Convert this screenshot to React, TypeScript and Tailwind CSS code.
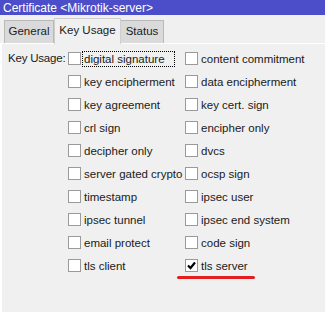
import React from "react";

const left = [
  "digital signature",
  "key encipherment",
  "key agreement",
  "crl sign",
  "decipher only",
  "server gated crypto",
  "timestamp",
  "ipsec tunnel",
  "email protect",
  "tls client",
];

const right = [
  "content commitment",
  "data encipherment",
  "key cert. sign",
  "encipher only",
  "dvcs",
  "ocsp sign",
  "ipsec user",
  "ipsec end system",
  "code sign",
  "tls server",
];

const Check = ({ label, checked, focused, mark }: { label: string; checked?: boolean; focused?: boolean; mark?: boolean }) => (
  <div className="relative flex h-[23px] items-center whitespace-nowrap">
    <div className="flex h-[13px] w-[13px] shrink-0 items-center justify-center border border-[#9a9a9a] bg-white">
      {checked && (
        <svg width="9" height="9" viewBox="0 0 9 9">
          <path d="M1 4.5 L3.5 7 L8 1.5" fill="none" stroke="#000" strokeWidth="2.2" />
        </svg>
      )}
    </div>
    <span
      className={
        "ml-[2px] px-[1px] leading-[14px] " +
        (focused ? "w-[91px] outline outline-1 outline-dotted outline-black" : "")
      }
    >
      {label}
    </span>
    {mark && <div className="absolute left-[-8px] top-[22px] h-[3px] w-[78px] rounded-full bg-[#e41e1e]" />}
  </div>
);

export default function App() {
  return (
    <div
      className="h-[312px] w-[325px] overflow-hidden bg-[#f0f0f0] text-[11.5px] text-[#1a1a1a]"
      style={{ fontFamily: "'Liberation Sans', Arial, sans-serif" }}
    >
      <div className="flex h-[15px] items-center bg-[#4b4ec8] pl-[3px] text-[12px] text-white leading-none">
        Certificate &lt;Mikrotik-server&gt;
      </div>
      <div className="flex h-[28px] items-end pl-[4px]">
        <div className="flex h-[23px] w-[50px] items-center justify-center border border-b-0 border-[#b9b9b9] bg-[#dadada]">
          General
        </div>
        <div className="z-10 -mb-[1px] flex h-[26px] w-[67px] items-center justify-center border border-b-0 border-[#cfcfcf] bg-[#f0f0f0] pb-[2px]">
          Key Usage
        </div>
        <div className="flex h-[23px] w-[43px] items-center justify-center border border-b-0 border-l-0 border-[#b9b9b9] bg-[#dadada]">
          Status
        </div>
      </div>
      <div className="flex h-[269px] border-l-2 border-t border-white pt-[3px] pl-[6px]">
        <div className="h-[23px] w-[60px] shrink-0 whitespace-nowrap leading-[23px] tracking-[-0.2px]">Key Usage:</div>
        <div className="flex w-[117px] shrink-0 flex-col">
          {left.map((l, i) => (
            <Check key={l} label={l} focused={i === 0} />
          ))}
        </div>
        <div className="flex flex-col">
          {right.map((r) => (
            <Check key={r} label={r} checked={r === "tls server"} mark={r === "tls server"} />
          ))}
        </div>
      </div>
    </div>
  );
}
